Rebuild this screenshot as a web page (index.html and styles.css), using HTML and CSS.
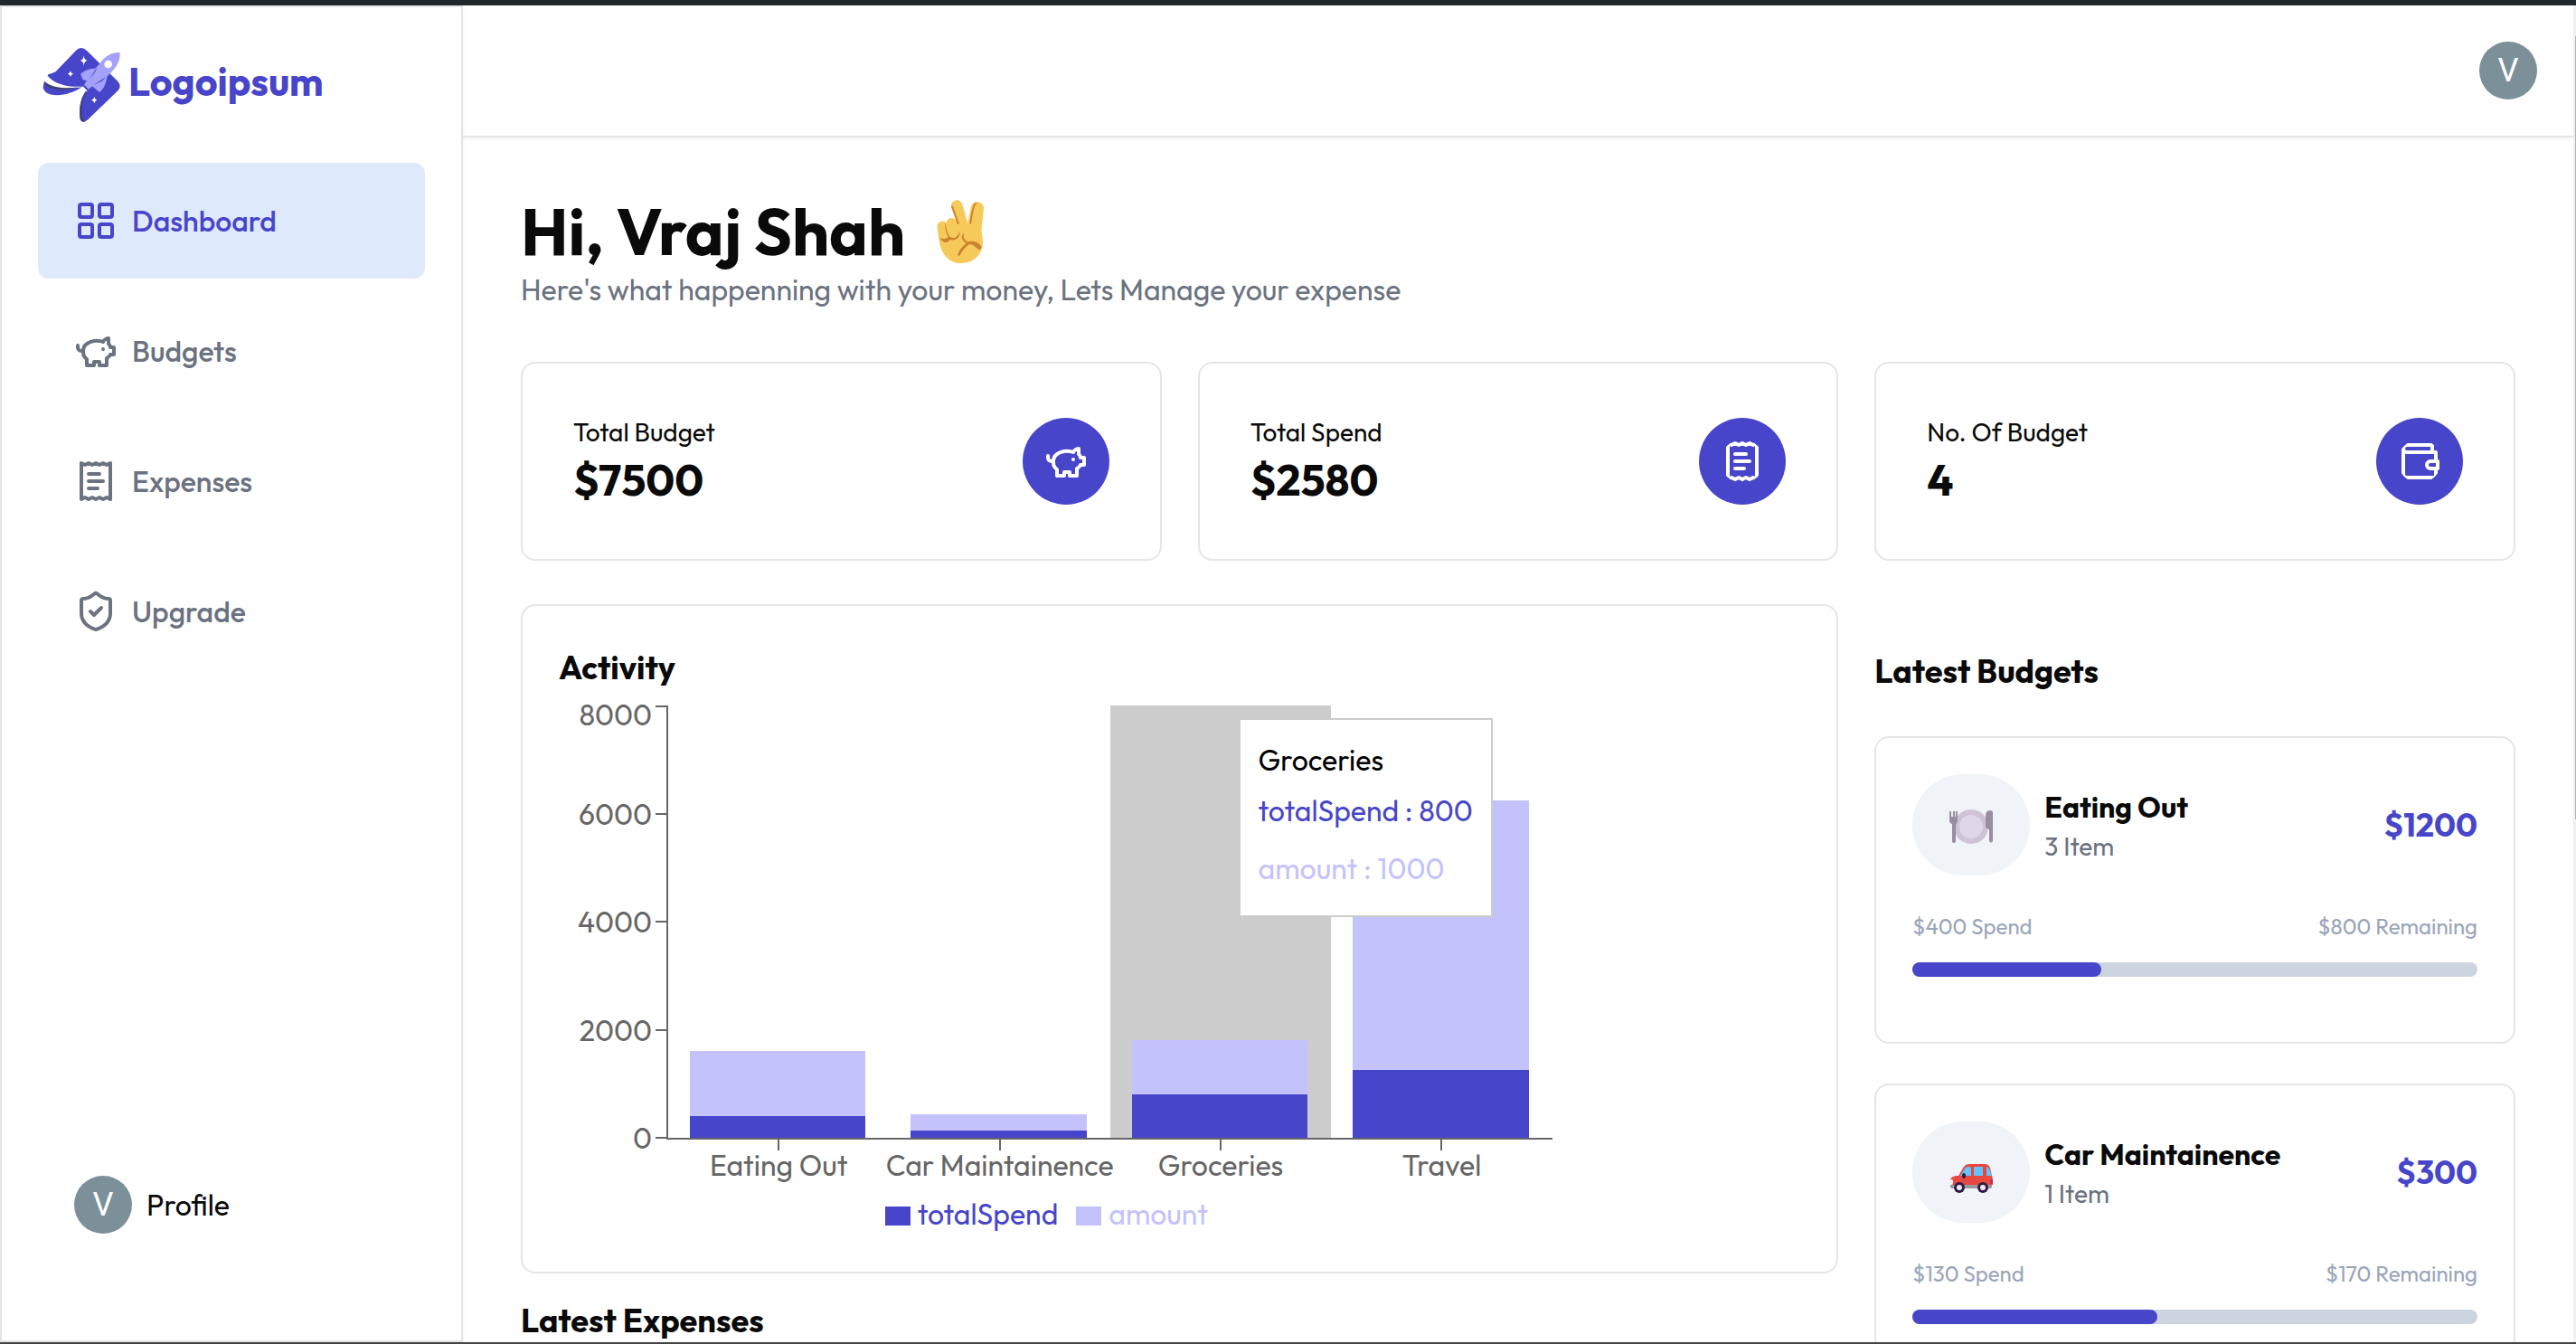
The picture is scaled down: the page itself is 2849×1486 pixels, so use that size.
FILE: index.html
```html
<!DOCTYPE html>
<html lang="en">
<head>
<meta charset="utf-8">
<meta name="viewport" content="width=device-width, initial-scale=1">
<title>Dashboard</title>
<link rel="stylesheet" href="styles.css">
</head>
<body>
<svg class="sprite" aria-hidden="true">
  <symbol id="grid" viewBox="0 0 24 24"><rect width="7" height="7" x="3" y="3" rx="1"/><rect width="7" height="7" x="14" y="3" rx="1"/><rect width="7" height="7" x="14" y="14" rx="1"/><rect width="7" height="7" x="3" y="14" rx="1"/></symbol>
  <symbol id="piggy" viewBox="0 0 24 24"><path d="M19 5c-1.5 0-2.8 1.4-3 2-3.5-1.5-11-.3-11 5 0 1.8 0 3 2 4.5V20h4v-2h3v2h4v-4c1-.5 1.7-1 2-2h2v-4h-2c0-1-.5-1.5-1-2V5z"/><path d="M2 9v1c0 1.1.9 2 2 2h1"/><path d="M16 11h.01"/></symbol>
  <symbol id="receipt" viewBox="0 0 24 24"><path d="M4 2v20l2-1 2 1 2-1 2 1 2-1 2 1 2-1 2 1V2l-2 1-2-1-2 1-2-1-2 1-2-1-2 1Z"/><path d="M14 8H8"/><path d="M16 12H8"/><path d="M13 16H8"/></symbol>
  <symbol id="shield" viewBox="0 0 24 24"><path d="M20 13c0 5-3.5 7.5-7.66 8.95a1 1 0 0 1-.67-.01C7.5 20.5 4 18 4 13V6a1 1 0 0 1 1-1c2 0 4.5-1.2 6.24-2.72a1.17 1.17 0 0 1 1.52 0C14.51 3.81 17 5 19 5a1 1 0 0 1 1 1z"/><path d="m9 12 2 2 4-4"/></symbol>
  <symbol id="wallet" viewBox="0 0 24 24"><path d="M21 12V7H5a2 2 0 0 1 0-4h14v4"/><path d="M3 5v14a2 2 0 0 0 2 2h16v-5"/><path d="M18 12a2 2 0 0 0 0 4h4v-4Z"/></symbol>
</svg>

<div class="app">
  <aside class="sidebar">
    <a class="logo" href="#">
      <svg class="logo-mark" viewBox="6 12 276 276" aria-hidden="true">
        <path fill="#4745ca" d="M38 119C38 112 56 112 66 104L131 37Q149 17 168 36L271 138Q285 154 271 169L170 266Q150 280 146 262C140 225 150 185 170 164L151 155C105 158 58 146 38 119Z"/>
        <path fill="#42426f" d="M146 262C140 225 150 185 170 164C154 195 148 225 152 252Q154 264 163 271Q150 275 146 262Z"/>
        <path fill="#4745ca" d="M28 138C50 162 100 165 152 157C120 180 62 194 32 174Q16 160 28 138Z"/>
        <path fill="#42426f" d="M28 138C50 160 96 163 140 157C100 171 50 170 28 148Z"/>
        <path fill="#a4a1fa" d="M278 42C247 42 228 56 213 76L196 95C178 94 160 102 147 113L155 133L168 136L157 152L172 166L186 154L210 174C223 164 232 146 235 122L252 104C270 86 279 68 278 42Z"/>
        <path fill="#4745ca" d="M203 91L172 135L197 105ZM231 123L190 151L218 137Z"/>
        <path fill="#fff" d="M151 157L156 153L171 167L168 172Z"/>
        <path fill="#4745ca" d="M154 154L160 150L174 164L170 169Z"/>
        <circle cx="239" cy="81" r="13" fill="#fff"/>
        <path fill="#fff" d="M158 52Q159 67 170 69Q159 71 158 87Q157 71 146 69Q157 67 158 52ZM114 102Q115 111 124 113Q115 115 114 124Q113 115 105 113Q113 111 114 102ZM193 189Q194 198 202 200Q194 202 193 211Q192 202 184 200Q192 198 193 189Z"/>
      </svg>
      <span>Logoipsum</span>
    </a>
    <nav class="nav">
      <a class="nav-item active" href="#"><svg class="icon"><use href="#grid"/></svg>Dashboard</a>
      <a class="nav-item" href="#"><svg class="icon"><use href="#piggy"/></svg>Budgets</a>
      <a class="nav-item" href="#"><svg class="icon"><use href="#receipt"/></svg>Expenses</a>
      <a class="nav-item" href="#"><svg class="icon"><use href="#shield"/></svg>Upgrade</a>
    </nav>
    <div class="profile"><button class="avatar" aria-label="Open user menu">V</button>Profile</div>
  </aside>

  <div class="page">
    <header class="topbar"><button class="avatar" aria-label="Open user menu">V</button></header>
    <main class="content">
      <h1>Hi, Vraj Shah
        <svg class="hand" viewBox="45 30 165 216" role="img" aria-label="Victory hand">
          <path fill="#f6ca5a" d="M97 58C91 35 122 23 132 45L151 110L162 55C167 32 205 36 204 63L196 136C200 158 203 172 200 186C194 222 164 243 128 243C88 243 65 212 58 180L50 128C46 102 74 98 80 110C82 90 104 88 113 102Z"/>
          <path fill="none" stroke="#cd832d" stroke-width="6" stroke-linecap="round" d="M99 55L119 111M178 45Q167 52 160 110"/>
          <path fill="#cd832d" d="M76 107C80 128 84 150 94 157C105 162 117 158 125 137C126 160 110 171 91 165C88 178 65 178 58 158C68 164 80 164 86 155C78 142 74 124 76 107ZM143 141C132 148 137 166 151 172C172 167 190 175 197 190Q196 200 186 197C177 189 168 180 155 180C143 190 132 202 125 217Q117 222 118 212C124 198 134 186 146 177C130 170 124 148 143 141Z"/>
        </svg>
      </h1>
      <p class="lead">Here's what happenning with your money, Lets Manage your expense</p>

      <section class="stats">
        <div class="card stat"><div><h2>Total Budget</h2><p>$7500</p></div><svg class="icon badge"><use href="#piggy"/></svg></div>
        <div class="card stat"><div><h2>Total Spend</h2><p>$2580</p></div><svg class="icon badge"><use href="#receipt"/></svg></div>
        <div class="card stat"><div><h2>No. Of Budget</h2><p>4</p></div><svg class="icon badge"><use href="#wallet"/></svg></div>
      </section>

      <div class="columns">
        <div class="main-column">
          <section class="card activity">
            <h2 class="title">Activity</h2>
            <div class="chart">
              <div class="y-axis">
                <span>8000</span><span>6000</span><span>4000</span><span>2000</span><span>0</span>
              </div>
              <div class="plot">
                <div class="band"><div class="bar amount" style="height:15%"></div><div class="bar spend" style="height:5%"></div></div>
                <div class="band"><div class="bar amount" style="height:3.75%"></div><div class="bar spend" style="height:1.625%"></div></div>
                <div class="band hover"><div class="bar amount" style="height:12.5%"></div><div class="bar spend" style="height:10%"></div></div>
                <div class="band"><div class="bar amount" style="height:62.5%"></div><div class="bar spend" style="height:15.625%"></div></div>
                <div class="tooltip">
                  <p>Groceries</p>
                  <ul><li class="spend-text">totalSpend : 800</li><li class="amount-text">amount : 1000</li></ul>
                </div>
              </div>
              <div class="x-axis"><span>Eating Out</span><span>Car Maintainence</span><span>Groceries</span><span>Travel</span></div>
              <ul class="legend">
                <li class="spend-text"><i class="swatch spend"></i>totalSpend</li>
                <li class="amount-text"><i class="swatch amount"></i>amount</li>
              </ul>
            </div>
          </section>
          <h2 class="title">Latest Expenses</h2>
        </div>

        <section class="budgets">
          <h2 class="title">Latest Budgets</h2>
          <a class="card budget" href="#">
            <div class="budget-head">
              <span class="emoji">
                <svg viewBox="0 0 48 48" role="img" aria-label="Plate">
                  <circle cx="24" cy="26" r="19" fill="#cdc2d6"/><circle cx="24" cy="26" r="13" fill="#e0d6e9"/>
                  <path fill="#998da2" d="M0 9h2v6h2V9h2v6h1V9h2v10q0 3-2 4v20q-2 2-4 0V23q-3-1-3-4ZM48 11v31q-2 3-4 0V29q-4-1-4-4V14q0-6 5-6 3 0 3 3Z"/>
                </svg>
              </span>
              <div class="budget-name"><h3>Eating Out</h3><p>3 Item</p></div>
              <strong>$1200</strong>
            </div>
            <div class="budget-meta"><span>$400 Spend</span><span>$800 Remaining</span></div>
            <div class="progress"><div style="width:33.33%"></div></div>
          </a>
          <a class="card budget" href="#">
            <div class="budget-head">
              <span class="emoji">
                <svg viewBox="0 0 48 48" role="img" aria-label="Car">
                  <path fill="#999" d="M1 37h46v3q0 2-2 2H3q-2 0-2-2Z"/>
                  <path fill="#e7483f" d="M1 32q1-3 6-4h3l6-10q2-3 6-3h17q4 0 6 4l2 9q1 2 1 5v5H0v-5Z"/>
                  <path fill="#62c4f8" d="M12 28l5-8q1-2 3-2h2q2 0 2 2v8ZM28 18h8q1 0 1 1v9H27v-9q0-1 1-1ZM41 18q2 0 3 2l3 8h-6Z"/>
                  <path fill="#f3f3f3" d="M1 32h1q2 0 2 2v2q0 2-2 2H0v-5Z"/>
                  <path fill="#c02a50" d="M48 32h-1q-2 0-2 2v1q0 2 2 2h1Z"/>
                  <ellipse cx="16" cy="28" rx="2" ry="3" fill="#2f1b45"/>
                  <circle cx="11" cy="41" r="6" fill="#2f1b45"/><circle cx="11" cy="41" r="3" fill="#f0e8f5"/>
                  <circle cx="37" cy="41" r="6" fill="#2f1b45"/><circle cx="37" cy="41" r="3" fill="#f0e8f5"/>
                </svg>
              </span>
              <div class="budget-name"><h3>Car Maintainence</h3><p>1 Item</p></div>
              <strong>$300</strong>
            </div>
            <div class="budget-meta"><span>$130 Spend</span><span>$170 Remaining</span></div>
            <div class="progress"><div style="width:43.33%"></div></div>
          </a>
        </section>
      </div>
    </main>
  </div>
  <div class="scrollbar"><div class="thumb"></div></div>
</div>
</body>
</html>
```
FILE: styles.css
```css
:root {
  --primary: #4745ca;
  --light: #c4c2fb;
  --line: #e5e5e5;
  --muted: #6b7280;
  --axis: #666;
}
* { box-sizing: border-box; margin: 0; padding: 0; }
body {
  height: 100vh;
  overflow: hidden;
  display: flex;
  flex-direction: column;
  border-top: 6px solid #22272b;
  border-bottom: 2px solid #444;
  background: #fff;
  color: #0a0a0a;
  font: 400 32px/48px Outfit, Lato, sans-serif;
}
a { color: inherit; text-decoration: none; }
ul { list-style: none; }
.sprite { display: none; }

.app { flex: 1; min-height: 0; display: flex; }
.sidebar {
  flex: none;
  width: 512px;
  display: flex;
  flex-direction: column;
  padding: 40px 40px 118px;
  border: 2px solid var(--line);
  box-shadow: 0 2px 4px rgba(0, 0, 0, .05);
}
.logo {
  display: flex;
  gap: 8px;
  margin-bottom: 40px;
  color: var(--primary);
  font-size: 43px;
  font-weight: 700;
  line-height: 84px;
}
.logo-mark { width: 92px; height: 92px; }
.nav { display: flex; flex-direction: column; gap: 16px; }
.nav-item {
  display: flex;
  align-items: center;
  gap: 16px;
  padding: 40px;
  border-radius: 12px;
  color: var(--muted);
  font-weight: 500;
}
.nav-item.active { background: #dee9fb; color: var(--primary); }
.icon {
  width: 48px;
  height: 48px;
  fill: none;
  stroke: currentColor;
  stroke-width: 2;
  stroke-linecap: round;
  stroke-linejoin: round;
}
.profile { display: flex; align-items: center; gap: 16px; margin-top: auto; padding-left: 40px; }
.avatar {
  width: 64px;
  height: 64px;
  border: 0;
  border-radius: 50%;
  background: #7c909a;
  color: #fff;
  font: 400 36px/64px Roboto, sans-serif;
}

.page { flex: 1; min-width: 0; overflow: hidden; }
.topbar {
  display: flex;
  justify-content: flex-end;
  padding: 40px;
  border-bottom: 2px solid var(--line);
  box-shadow: 0 2px 4px rgba(0, 0, 0, .05);
}
.content { padding: 64px; }
h1 { display: flex; align-items: center; gap: 34px; font-size: 72px; line-height: 80px; font-weight: 700; }
.hand { width: 55px; height: 72px; }
.lead { color: var(--muted); }
.card { border: 2px solid var(--line); border-radius: 16px; }
.stats { display: grid; grid-template-columns: repeat(3, 1fr); gap: 40px; margin-top: 56px; }
.stat { display: flex; align-items: center; justify-content: space-between; padding: 56px; }
.stat h2 { font-size: 28px; line-height: 40px; font-weight: 400; }
.stat p { font-size: 48px; line-height: 64px; font-weight: 700; }
.badge {
  width: 96px;
  height: 96px;
  padding: 24px;
  border-radius: 50%;
  overflow: hidden;
  background: var(--primary);
  color: #fff;
}
.columns { display: grid; grid-template-columns: repeat(3, 1fr); gap: 40px; margin-top: 48px; }
.main-column { grid-column: span 2; display: flex; flex-direction: column; gap: 24px; }
.title { font-size: 36px; line-height: 56px; font-weight: 700; }
.activity { padding: 40px; }

.chart {
  width: 80%;
  height: 600px;
  padding-top: 14px;
  display: grid;
  grid-template-columns: 121px 1fr;
  grid-template-rows: 480px auto 1fr;
  color: var(--axis);
}
.y-axis { display: flex; flex-direction: column; justify-content: space-between; padding-bottom: 2px; border-right: 2px solid var(--axis); }
.y-axis span { height: 0; display: flex; align-items: center; justify-content: flex-end; gap: 4px; line-height: 20px; }
.y-axis span::after { content: ""; width: 12px; height: 2px; background: var(--axis); }
.y-axis span:first-child { align-items: flex-start; }
.plot { position: relative; display: flex; border-bottom: 2px solid var(--axis); }
.band { flex: 1; display: flex; flex-direction: column; justify-content: flex-end; padding: 0 26px 0 24px; }
.band.hover { background: #ccc; }
.bar, .swatch { background: var(--light); }
.bar.spend, .swatch.spend { background: var(--primary); }
.spend-text { color: var(--primary); }
.amount-text { color: var(--light); }
.tooltip {
  position: absolute;
  top: 14px;
  left: 64.5%;
  padding: 20px;
  border: 2px solid #ccc;
  background: #fff;
  color: #000;
  white-space: nowrap;
}
.tooltip li { padding: 8px 0; }
.x-axis { grid-column: 2; display: grid; grid-template-columns: repeat(4, minmax(0, 1fr)); }
.x-axis span { display: flex; flex-direction: column; align-items: center; line-height: 32px; white-space: nowrap; }
.x-axis span::before { content: ""; width: 2px; height: 12px; background: var(--axis); }
.legend { grid-column: 1 / -1; display: flex; justify-content: center; gap: 20px; padding: 14px 20px 0 0; }
.legend li { display: flex; align-items: center; gap: 8px; height: 48px; }
.swatch { width: 28px; height: 21px; margin-top: 4px; }

.budgets { display: flex; flex-direction: column; gap: 44px; padding-top: 46px; }
.budget { height: 340px; padding: 40px; }
.budget-head { display: flex; align-items: center; gap: 16px; }
.emoji {
  width: 130px;
  height: 112px;
  display: flex;
  align-items: center;
  justify-content: center;
  border-radius: 56px;
  background: #f0f4f8;
}
.emoji svg { width: 48px; height: 48px; }
.budget-name { flex: 1; }
.budget-name h3 { font-size: 32px; font-weight: 700; }
.budget-name p { color: var(--muted); font-size: 28px; line-height: 40px; }
.budget strong { color: var(--primary); font-size: 36px; line-height: 56px; font-weight: 700; }
.budget-meta { display: flex; justify-content: space-between; margin: 40px 0 24px; color: #9aa5b8; font-size: 24px; line-height: 32px; }
.progress { height: 16px; border-radius: 8px; background: #ccd4e0; }
.progress div { height: 16px; border-radius: 8px; background: var(--primary); }

.scrollbar { flex: none; width: 3px; padding: 34px 0 0 2px; background: #f0f0f0; }
.thumb { height: 60%; background: #b4b4b4; }
```
